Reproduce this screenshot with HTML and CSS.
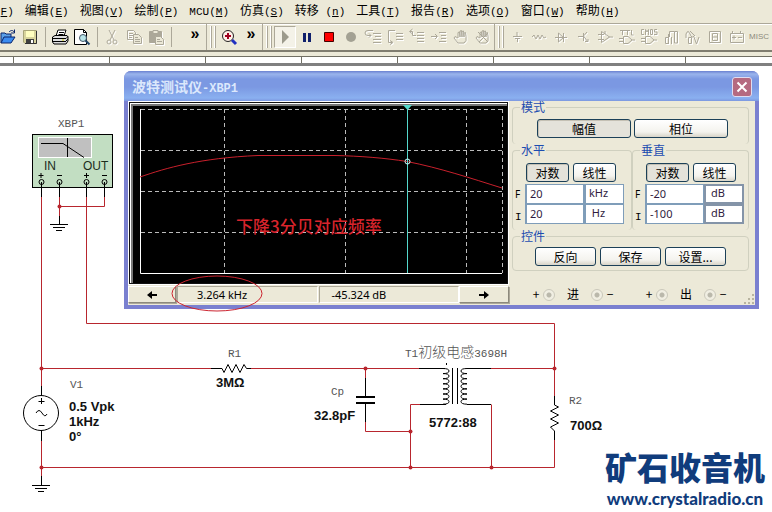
FILE: index.html
```html
<!DOCTYPE html>
<html lang="zh-CN">
<head>
<meta charset="utf-8">
<title>Multisim</title>
<link rel="stylesheet" href="styles.css">
</head>
<body>
<nav class="menubar">
  <button class="menu"><span>(<u>F</u>)</span></button>
  <button class="menu">编辑<span>(<u>E</u>)</span></button>
  <button class="menu">视图<span>(<u>V</u>)</span></button>
  <button class="menu">绘制<span>(<u>P</u>)</span></button>
  <button class="menu"><span>MCU(<u>M</u>)</span></button>
  <button class="menu">仿真<span>(<u>S</u>)</span></button>
  <button class="menu">转移<span> (<u>n</u>)</span></button>
  <button class="menu">工具<span>(<u>T</u>)</span></button>
  <button class="menu">报告<span>(<u>R</u>)</span></button>
  <button class="menu">选项<span>(<u>O</u>)</span></button>
  <button class="menu">窗口<span>(<u>W</u>)</span></button>
  <button class="menu">帮助<span>(<u>H</u>)</span></button>
</nav>

<div class="toolbar">
  <div class="tools tools-file">
    <button class="tool" aria-label="打开"><svg viewBox="0 0 18 18"><path d="M2 15V5h4l1 1h5v3" fill="#5aa0e8" stroke="#0a246a"/><path d="M2 15l3-6h11l-4 6z" fill="#3c8cf0" stroke="#0a246a"/><path d="M10 4c2-2 4-2 5 0M15.500 1.500V5H12" fill="none" stroke="#0a246a"/></svg></button>
    <button class="tool" aria-label="保存"><svg viewBox="0 0 18 18"><path d="M2.500 2.500h13v13H4l-1.500-1.500z" fill="#d8d49c" stroke="#a8a578"/><path d="M5 3h8v6H5z" fill="#ffffc0"/><path d="M5 11h8v4H5z" fill="#404040"/><path d="M10 12h2v3h-2z" fill="#fff"/><path d="M15.500 3v12.500H4" fill="none" stroke="#333"/></svg></button>
    <i class="sep"></i>
    <button class="tool" aria-label="打印"><svg viewBox="0 0 18 18"><path d="M5 8l2-6h8l-2 6" fill="#fff" stroke="#000"/><path d="M8 4.500h5M7.500 6.500h5" stroke="#000"/><path d="M1.500 9L4 7.500h12l1 1.500v4l-2 3H3l-1.500-2z" fill="#ddd" stroke="#000"/><path d="M2 10.500h13M2 13.500h13M15 10.500l2-2M15 13l2-2" stroke="#000"/><path d="M11 12h2" stroke="#cc0"/></svg></button>
    <button class="tool" aria-label="打印预览"><svg viewBox="0 0 18 18"><path d="M1.500 1.500h9l3 3v12h-12z" fill="#fff" stroke="#000"/><path d="M10.500 1.500v3h3" fill="none" stroke="#000"/><circle cx="10" cy="10" r="3.500" fill="#b8e4e8" stroke="#456"/><path d="M12.500 12.500l4 4" stroke="#246" stroke-width="2"/></svg></button>
    <i class="sep"></i>
    <button class="tool dim" aria-label="剪切"><svg viewBox="0 0 18 18"><path d="M6 2l5 10M12 2L7 12"/><circle cx="6" cy="14" r="2"/><circle cx="12" cy="14" r="2"/></svg></button>
    <button class="tool dim" aria-label="复制"><svg viewBox="0 0 18 18"><path d="M2.500 2.500h6l2 2v7h-8zM4 5.500h4M4 7.500h4M4 9.500h3"/><path d="M8.500 6.500h5l3 3v6h-8z" fill="#ece9d8"/><path d="M10 9.500h3M10 11.500h5M10 13.500h5"/></svg></button>
    <button class="tool dim" aria-label="粘贴"><svg viewBox="0 0 18 18"><path d="M2.500 3.500h12v11h-12z" fill="#aca899"/><path d="M6 2.500h5v3H6z" fill="#ece9d8"/><path d="M8.500 8.500h5l3 3v5h-8z" fill="#ece9d8"/><path d="M10 11.500h3M10 13.500h5"/></svg></button>
    <i class="sep"></i>
    <button class="tool more" aria-label="更多">»</button>
  </div>
  <div class="tools">
    <i class="grip"></i>
    <button class="tool" aria-label="放大"><svg viewBox="0 0 18 18"><circle cx="8" cy="8" r="5.500" fill="#fff0e8" stroke="#222"/><path d="M8 5v6M5 8h6" stroke="#a00020" stroke-width="2"/><path d="M12 12l4 4" stroke="#2030c0" stroke-width="3"/></svg></button>
    <button class="tool more" aria-label="更多">»</button>
  </div>
  <div class="tools">
    <i class="grip"></i>
    <button class="tool pressed" aria-label="运行"><svg viewBox="0 0 18 18"><path d="M6 2v14l7-7z" fill="#9c9a8c"/></svg></button>
    <button class="tool" aria-label="暂停"><svg viewBox="0 0 18 18"><path d="M5 5h3v9H5zM10 5h3v9h-3z" fill="#10206c"/></svg></button>
    <button class="tool" aria-label="停止"><svg viewBox="0 0 18 18"><path d="M4.500 4.500h9v9h-9z" fill="#f00" stroke="#400"/></svg></button>
    <button class="tool" aria-label="记录"><svg viewBox="0 0 18 18"><circle cx="9" cy="9" r="5" fill="#a3a193"/></svg></button>
    <button class="tool dim" aria-label="步入"><svg viewBox="0 0 18 18"><path d="M9 2.500H4q-3 0-3 2.500t3 2.500h3M5 5.500l2 2-2 2M9 5.500h8M11 8.500h6M9 11.500h8M9 14.500h8"/></svg></button>
    <button class="tool dim" aria-label="步过"><svg viewBox="0 0 18 18"><path d="M9 2.500H2.500v12H6M4 12.500l3 2-3 2M10 5.500h7M10 8.500h7M10 11.500h7"/></svg></button>
    <button class="tool dim" aria-label="步出"><svg viewBox="0 0 18 18"><path d="M4.500 1L1.500 3.500l3 2.500M2 3.500h2.500v4H8M9 4.500h7M9 7.500h7M9 10.500h7M9 13.500h7"/></svg></button>
    <button class="tool dim" aria-label="运行到光标"><svg viewBox="0 0 18 18"><path d="M1 8.500h6M5 6l2.500 2.500L5 11M9 4.500h7M11 7.500h5M11 10.500h5M9 13.500h7"/></svg></button>
    <button class="tool dim" aria-label="切换断点"><svg viewBox="0 0 18 18"><path id="hand" d="M6 15l-4-5 1-1.500L6 10V4.500L7.500 4 8 9V3l1.500-.5L10 9V3.500l1.500-.5L12 9V5l1.500-.5.500 4v4L12 15z"/></svg></button>
    <button class="tool dim" aria-label="清除断点"><svg viewBox="0 0 18 18"><use href="#hand"/><path d="M4 4l10 10M5 14l9-9"/></svg></button>
  </div>
  <div class="tools tools-parts">
    <i class="grip"></i>
    <button class="tool dim" aria-label="电源"><svg viewBox="0 0 18 18"><path d="M9 4v4M5 8.500h9M7 10.500h5M9.500 11v3"/></svg></button>
    <button class="tool dim" aria-label="基本元件"><svg viewBox="0 0 18 18"><path d="M2 9l2-2 2 4 2-4 2 4 2-4 2 3 2-1"/></svg></button>
    <button class="tool dim" aria-label="二极管"><svg viewBox="0 0 18 18"><path d="M3 9.500h12M6.500 5v9l5-4.500zM11.500 5v9"/></svg></button>
    <button class="tool dim" aria-label="晶体管"><svg viewBox="0 0 18 18"><path d="M4 8.500h5M9.500 5v8M13 4L9.500 8l4.500 6M11 13.500h3V11"/></svg></button>
    <button class="tool dim" aria-label="模拟元件"><svg viewBox="0 0 18 18"><path d="M5.500 3.500v11l8-5.500zM2 6.500h6M2 11.500h6M13 9h4M9 3v3"/></svg></button>
    <button class="tool dim" aria-label="TTL"><svg viewBox="0 0 18 18"><path d="M2 2.500h5M4.500 2.500V7M7 2.500h5M9.500 2.500V7M13.500 2v5h2M5.500 8.500H10l4 3.500-4 3.500H5.500zM1 10.500h4M1 13.500h4M14 12h3"/></svg></button>
    <button class="tool dim" aria-label="CMOS"><svg viewBox="0 0 18 18"><path d="M4 1.500H1.500v5H4M5.500 7V1.500L7 4l1.500-2.500V7M10.500 1.500h2v5h-2zM17 1.500h-2.500V4H17v2.500h-3M5.500 8.500H10l4 3.500-4 3.500H5.500zM1 10.500h4M1 13.500h4M14 12h3"/></svg></button>
    <button class="tool dim" aria-label="数字元件"><svg viewBox="0 0 18 18"><path d="M7.500 9V3.500h5V15M12.500 3.500h3V15h-3M3.500 9.500h3v6h-3zM6.500 6v10M9.500 9v7"/></svg></button>
    <button class="tool dim" aria-label="混合元件"><svg viewBox="0 0 18 18"><path d="M2 10V6q2-5 4 0t4 2M4.500 9.500h3v6h-3zM10 9l2.500 7L15 9M6 3l5 5"/></svg></button>
    <button class="tool dim" aria-label="指示器"><svg viewBox="0 0 18 18"><path d="M3.500 3.500h11v11h-11zM6.500 5.500h5v7h-5zM6.500 9h5"/></svg></button>
    <button class="tool dim" aria-label="功率元件"><svg viewBox="0 0 18 18"><path d="M2.500 5.500h13v9h-13zM4.500 3v2.500M12.500 3v2.500M4 9.500h4M10 9.500h4M6 7.500v4"/></svg></button>
    <button class="tool misc">MISC</button>
  </div>
</div>
<div class="ruler"></div>

<main class="sheet">
  <svg class="schematic" width="772" height="446" viewBox="0 66 772 446" role="img" aria-label="电路图">
    <g class="part">
      <rect x="32.500" y="134.500" width="80" height="53" fill="#c2dec2"/>
      <rect x="38.500" y="137.500" width="53" height="20" fill="#c0c0c0" stroke="#fff"/>
      <path d="M41 143.500h22l21 14M67.500 138v19"/>
      <path d="M38.500 175.500h5M41 173v5M57 175.500h5M84 175.500h5M86.500 173v5M102 175.500h5"/>
      <circle cx="41.500" cy="182" r="2.500"/><circle cx="59.500" cy="182" r="2.500"/><circle cx="86.500" cy="182" r="2.500"/><circle cx="104.500" cy="182" r="2.500"/>
    </g>
    <g class="wire">
      <path d="M41.500 197V386M59.500 197v19M104.500 197v9.500h-45M86.500 197v126.500h468V396"/>
      <path d="M41.500 368.500H211M251 368.500h168M491 368.500h63M365.500 368.500V378M365.500 422v9.500h45M420 404.500h-9.500v63M491.500 404.500v63M41.500 441v35M41.500 467.500h513V440"/>
    </g>
    <g class="part">
      <path d="M41.500 182v15M59.500 182v15M86.500 182v15M104.500 182v15"/>
      <path d="M59.500 216v8M50 224.500h18M53 227.500h12M56 230.500h6"/>
      <path d="M41.500 386v10M41.500 430v11M38.500 401.500h6M41.500 398v6M38.500 425.500h6M36 413q3-5 6 0t5 1"/>
      <circle cx="41" cy="413" r="17.500"/>
      <path d="M41.500 476v9M32 485.500h18M35 488.500h12M38 491.500h6"/>
      <path d="M211 368.500h11l2 4 4-8 4 8 4-8 4 8 4-8 2.500 4H251"/>
      <path d="M365.500 378v18M365.500 404v18"/>
      <path d="M356 397h19M356 403h19" stroke-width="2"/>
      <path d="M419 368.500h26M420 404.500h26M446.500 363v2M467 368.500h24M467 404.500h24M452.500 368v36M457.500 368v36"/>
      <path d="M443 368.500q6 0 6 2.500t-6 2.600q6 0 6 2.500t-6 2.600q6 0 6 2.500t-6 2.600q6 0 6 2.500t-6 2.600q6 0 6 2.500t-6 2.600q6 0 6 2.500t-6 2.600q6 0 6 2.500t-6 2.600"/>
      <path d="M467 368.500q-6 0-6 2.500t6 2.600q-6 0-6 2.500t6 2.600q-6 0-6 2.500t6 2.600q-6 0-6 2.500t6 2.600q-6 0-6 2.500t6 2.600q-6 0-6 2.500t6 2.600q-6 0-6 2.500t6 2.600"/>
      <path d="M554.500 396v9l4 2-8 4 8 4-8 4 8 4-8 4 4 4v9"/>
    </g>
    <g class="node">
      <circle cx="59.500" cy="206.500" r="2"/><circle cx="41.500" cy="368.500" r="2"/><circle cx="41.500" cy="467.500" r="2"/><circle cx="365.500" cy="368.500" r="2"/><circle cx="554.500" cy="368.500" r="2"/><circle cx="410.500" cy="431.500" r="2"/><circle cx="410.500" cy="467.500" r="2"/><circle cx="491.500" cy="467.500" r="2"/>
    </g>
    <g class="pin-name"><text x="44" y="170">IN</text><text x="83" y="170">OUT</text></g>
    <g class="ref">
      <text x="58" y="127">XBP1</text><text x="70" y="388">V1</text><text x="228" y="357">R1</text><text x="331" y="395">Cp</text><text x="569" y="404">R2</text>
      <text x="405" y="357">T1<tspan class="han">初级电感</tspan>3698H</text>
    </g>
    <g class="value">
      <text x="69" y="411">0.5 Vpk</text><text x="69" y="426">1kHz</text><text x="69" y="441">0°</text>
      <text x="216" y="387">3MΩ</text><text x="314" y="420">32.8pF</text><text x="429" y="427">5772:88</text><text x="570" y="430">700Ω</text>
    </g>
  </svg>

  <section class="window">
    <header class="titlebar">
      <h1>波特测试仪<span>-XBP1</span></h1>
      <button class="close" aria-label="关闭"><svg viewBox="0 0 18 18"><path d="M4.500 4.500l9 9M13.500 4.500l-9 9" stroke="#fff" stroke-width="2"/></svg></button>
    </header>
    <div class="client">
      <div class="scope">
        <div class="plot">
          <svg viewBox="132 105 373 176" role="img" aria-label="幅频特性">
            <path class="grid" d="M141 109.500h362M141 150.500h362M141 191.500h362M141 232.500h362M224.500 109v164M345.500 109v164M466.500 109v164M502.500 109v164"/>
            <path d="M140.500 109v164.500H502" stroke="#fff" fill="none"/>
            <path class="trace" d="M140 177C166 168 200 158 258 155.500H335C360 156 385 158 407 161.500C440 168 470 178 502 188"/>
            <path d="M407.500 105v168" stroke="#54d8cc"/>
            <path d="M403 105h9l-4.500 5z" fill="#54d8cc"/>
            <circle cx="407.500" cy="161.500" r="2.500" fill="none" stroke="#cff"/>
            <text class="remark" x="236" y="233">下降3分贝对应频率</text>
          </svg>
        </div>
        <div class="status">
          <button class="nudge" aria-label="左移"><svg viewBox="0 0 12 10"><path d="M1 5l5-4v3h5v2H6v3z"/></svg></button>
          <output>3.264 kHz</output>
          <output>-45.324 dB</output>
          <button class="nudge" aria-label="右移"><svg viewBox="0 0 12 10"><path d="M11 5L6 1v3H1v2h5v3z"/></svg></button>
        </div>
      </div>
      <form class="panel">
        <fieldset class="group mode">
          <legend>模式</legend>
          <div class="buttons"><button type="button" class="btn wide on">幅值</button><button type="button" class="btn wide">相位</button></div>
        </fieldset>
        <div class="axes">
          <fieldset class="group axis">
            <legend>水平</legend>
            <div class="buttons"><button type="button" class="btn on">对数</button><button type="button" class="btn">线性</button></div>
            <div class="field"><label for="hf">F</label><input id="hf" value="20"><input class="unit" aria-label="单位" value="kHz"></div>
            <div class="field"><label for="hi" class="low">I</label><input id="hi" value="20"><input class="unit" aria-label="单位" value="Hz"></div>
          </fieldset>
          <fieldset class="group axis">
            <legend>垂直</legend>
            <div class="buttons"><button type="button" class="btn on">对数</button><button type="button" class="btn">线性</button></div>
            <div class="field"><label for="vf">F</label><input id="vf" value="-20"><input class="unit fixed" aria-label="单位" value="dB" readonly></div>
            <div class="field"><label for="vi" class="low">I</label><input id="vi" value="-100"><input class="unit fixed" aria-label="单位" value="dB" readonly></div>
          </fieldset>
        </div>
        <fieldset class="group controls">
          <legend>控件</legend>
          <div class="buttons"><button type="button" class="btn mid">反向</button><button type="button" class="btn mid">保存</button><button type="button" class="btn mid">设置...</button></div>
        </fieldset>
        <div class="ports">
          <div class="port"><label for="p1">+</label><input type="radio" id="p1" disabled><span>进</span><input type="radio" id="p2" disabled><label for="p2">−</label></div>
          <div class="port"><label for="p3">+</label><input type="radio" id="p3" disabled><span>出</span><input type="radio" id="p4" disabled><label for="p4">−</label></div>
        </div>
      </form>
    </div>
    <svg class="sizer" viewBox="0 0 12 12"><path d="M9 1h2v2H9zM5 5h2v2H5zM9 5h2v2H9zM1 9h2v2H1zM5 9h2v2H5zM9 9h2v2H9z" fill="#b8b4a0"/></svg>
    <svg class="callout" viewBox="0 0 92 37"><ellipse cx="46" cy="18.500" rx="45" ry="17.500"/></svg>
  </section>

  <a class="brand" href="#"><strong>矿石收音机</strong><span>www.crystalradio.cn</span></a>
</main>
</body>
</html>
```
FILE: styles.css
```css
* { box-sizing: border-box; }
body {
  margin: 0;
  min-height: 100vh;
  display: flex;
  flex-direction: column;
  overflow: hidden;
  background: #fff;
  font: 12px/14px "Noto Sans CJK SC", sans-serif;
  color: #000;
}
button { font: inherit; color: inherit; padding: 0; margin: 0; border: 0; background: none; flex: none; }
svg { display: block; }

.menubar {
  display: flex;
  gap: 11px;
  height: 23px;
  margin-left: -8px;
  padding: 0 0 1px 2px;
  background: #ece9d8;
}
.menu { white-space: pre; }
.menu span { font: 11px/14px "Liberation Mono", monospace; }

.toolbar {
  display: flex;
  height: 29px;
  background: #ece9d8;
  border-top: 1px solid #aca899;
  border-bottom: 2px solid #807d70;
  box-shadow: inset 0 1px #fff;
}
.tools { display: flex; align-items: center; flex: none; border-right: 1px solid #aca899; }
.tools-file { margin-left: -3px; }
.tools-parts { border-right: 0; }
.tool { width: 22px; height: 22px; display: grid; place-items: center; }
.tool svg { width: 18px; height: 18px; }
.tool.more { font: bold 16px/16px "Liberation Sans", sans-serif; padding-bottom: 8px; }
.tools-file .more { margin-left: 9px; }
.tool.pressed { background: #f4f2e8; border: 1px solid; border-color: #aca899 #fff #fff #aca899; }
.dim svg { fill: none; stroke: #aca899; filter: drop-shadow(1px 1px #fff); }
.misc { font: 8px/10px "Liberation Sans", sans-serif; color: #8c897c; }
.sep { width: 8px; height: 20px; background: linear-gradient(#aca899, #aca899) 4px 0 / 1px 100% no-repeat; }
.grip { width: 11px; height: 22px; background: repeating-linear-gradient(90deg, #fff 0 1px, #aca899 1px 2px, transparent 2px 4px) 3px 0 / 6px 100% no-repeat; }

.ruler {
  height: 14px;
  border-top: 4px solid #ece9d8;
  border-bottom: 3px solid #808080;
  background: linear-gradient(#716f64, #716f64) 0 0 / 100% 1px no-repeat, linear-gradient(90deg, #716f64 1px, #fff 1px) 13px 0 / 96px 100%;
}

.sheet { position: relative; flex: 1; min-height: 446px; }
.part { fill: none; stroke: #000; }
.wire { fill: none; stroke: #b8262e; }
.node { fill: #b8262e; }
.pin-name { font: 12px "Liberation Sans", sans-serif; fill: #1c2c1c; }
.ref { font: 11px "Liberation Mono", monospace; fill: #555; }
.han { font: 300 14px "Noto Sans CJK SC", sans-serif; }
.value { font: bold 13px "Liberation Sans", sans-serif; fill: #111; }

.window {
  position: absolute;
  left: 124px;
  top: 5px;
  width: 635px;
  padding: 0 4px 4px;
  background: #7a80d0;
  border-radius: 7px 7px 0 0;
}
.titlebar {
  display: flex;
  align-items: center;
  justify-content: space-between;
  height: 30px;
  margin: 0 -4px;
  padding: 2px 7px 0 8px;
  border-radius: 7px 7px 0 0;
  background: linear-gradient(#6a80d0, #9ab4ec 3px, #7b98e2 8px, #7b98e2 16px, #8ab0f0 27px, #7d98e0);
}
h1 { margin: 0; font-size: 14px; line-height: 20px; font-weight: bold; color: #dce8fc; }
h1 span { font: bold 12px/20px "Liberation Mono", monospace; }
.close { width: 20px; height: 20px; display: grid; place-items: center; border: 1px solid #e0dcf0; border-radius: 3px; background: #b56a80; }
.close svg { width: 18px; height: 18px; }
.client { display: flex; background: #ece9d8; }
.scope { flex: none; width: 381px; }
.plot { background: #000; border: 1px solid #fff; outline: 1px solid #111; outline-offset: -2px; padding: 3px; box-shadow: inset 2px 2px #fff, inset 4px 4px #777; }
.grid { stroke: #bbb; stroke-dasharray: 4 3; fill: none; }
.trace { stroke: #c8202c; fill: none; }
.remark { font: 500 17px "Noto Sans CJK SC", sans-serif; fill: #d8242c; }
.status { display: grid; grid-template-columns: 48px 1fr 1fr 50px; height: 20px; padding: 1px 0 2px; }
.nudge { display: grid; place-items: center; border: 1px solid; border-color: #fff #8c897c #8c897c #fff; box-shadow: 1px 1px #aca899; }
.nudge svg { width: 12px; height: 10px; }
output { padding-left: 19px; font: 11px/15px "Noto Sans", sans-serif; border: 1px solid; border-color: #aca899 #fff #fff #aca899; margin-left: 1px; }
output + output { padding-left: 12px; }

.panel { flex: 1; padding: 0 6px 0 3px; min-width: 0; }
.group { margin: 0; min-width: 0; padding: 0; border: 1px solid #d0d0bf; border-radius: 4px; }
.group legend { margin-left: 7px; padding: 0 1px; line-height: 12px; color: #1c4cb0; }
.mode { height: 43px; border-bottom: 0; }
.buttons { display: flex; gap: 3px; }
.mode .buttons { padding: 6px 0 0 24px; }
.axes { display: grid; grid-template-columns: 120px 1fr; }
.axis { height: 86px; border-bottom: 0; }
.axis .buttons { padding: 7px 0 2px 13px; gap: 4px; }
.controls { height: 41px; }
.controls .buttons { padding: 5px 0 0 22px; gap: 4px; }
.btn {
  width: 43px;
  height: 19px;
  line-height: 16px;
  border: 1px solid #1c4058;
  border-radius: 3px;
  background: linear-gradient(#fff, #f4f3ee 70%, #d8d4c8);
}
.btn.on { background: #e4e2da; box-shadow: inset 1px 1px #c4c0b4; }
.btn.wide { width: 94px; }
.btn.mid { width: 61px; }
.field { display: flex; height: 20px; padding-left: 2px; }
.field label { width: 10px; font: 10px/20px "Noto Sans", sans-serif; }
.field .low { font: 11px/26px "Liberation Mono", monospace; }
.field input {
  width: 59px;
  height: 20px;
  padding: 0 0 2px 3px;
  border: 1px solid #7f9db9;
  border-width: 1px 1px 1px 2px;
  background: #fff;
  font: 11px/16px "Noto Sans", sans-serif;
  color: #301c40;
}
.field .unit { width: 40px; padding: 0 12px 3px 0; text-align: center; }
.field .fixed { border: 2px solid #8494a8; }
.ports { display: flex; gap: 31px; padding: 16px 0 0 20px; }
.port { display: flex; align-items: center; gap: 3px; }
.port label { width: 8px; text-align: center; }
.port span { margin: 0 9px; }
.port input {
  appearance: none;
  width: 12px;
  height: 12px;
  margin: 2px 0 0;
  border: 1px solid #cac8bb;
  border-radius: 50%;
  background: radial-gradient(#bab8ab 0 2px, #f0eee2 3px);
}
.sizer { position: absolute; right: 4px; bottom: 4px; width: 12px; height: 12px; }
.callout { position: absolute; left: 47px; top: 204px; width: 92px; height: 37px; fill: none; stroke: #cc2430; }

.brand { position: absolute; right: 7px; bottom: 1px; display: grid; justify-items: center; color: #103c7c; text-decoration: none; }
.brand strong { font: 900 32px/38px Lato, "Noto Sans CJK SC", sans-serif; }
.brand span { font: 900 17px/24px Lato, sans-serif; }
```
